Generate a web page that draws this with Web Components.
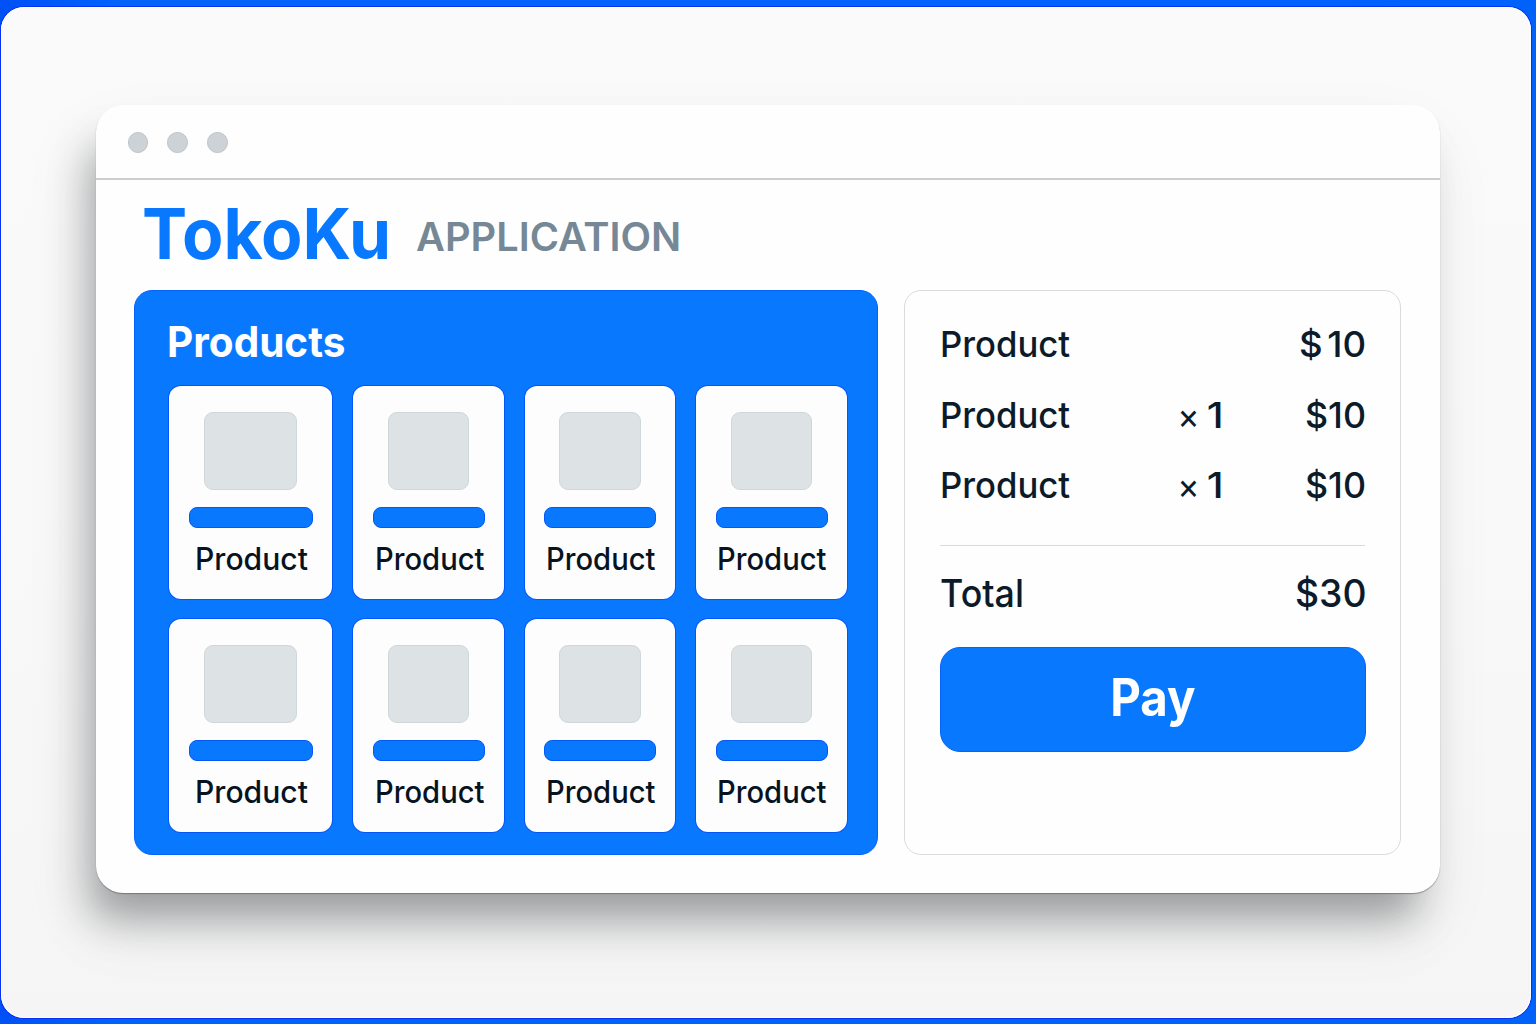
<!DOCTYPE html>
<html lang="en">
<head>
<meta charset="utf-8">
<title>TokoKu Application</title>
<style>
html,body{margin:0;height:100%}
body{background:linear-gradient(90deg,#0050f5,#0064fb 8%,#0062fb);font-family:Inter,"Liberation Sans",sans-serif;color:#0c1b2a;overflow:hidden}
</style>
</head>
<body>
<toko-stage>
  <app-window>
    <brand-header></brand-header>
    <product-panel></product-panel>
    <cart-panel></cart-panel>
  </app-window>
</toko-stage>
<script>
const define = (name, html, after) => customElements.define(name, class extends HTMLElement {
  constructor(){ super(); this.attachShadow({mode:'open'}).innerHTML = html; }
  connectedCallback(){ if(after) after(this, this.shadowRoot); }
});

// Text whose ink spans exactly `w` pixels and whose capitals are `cap` pixels tall.
class FitText extends HTMLElement {
  constructor(){
    super();
    this.attachShadow({mode:'open'}).innerHTML = `<style>
      :host{display:block;flex:none}
      span{display:inline-block;white-space:pre;transform-origin:0 50%;vertical-align:top}
    </style><span></span>`;
  }
  connectedCallback(){
    const w=+this.getAttribute('w'), cap=+this.getAttribute('cap'), weight=this.getAttribute('weight')||500;
    const text=this.getAttribute('text'), size=cap/.7273;
    const c=document.createElement('canvas').getContext('2d');
    c.font=`${weight} ${size}px Inter`;
    c.wordSpacing='-5px';
    const m=c.measureText(text), left=m.actualBoundingBoxLeft, ink=m.actualBoundingBoxRight+left;
    const s=this.shadowRoot.querySelector('span'), k=w/ink;
    s.textContent=text;
    this.style.cssText+=`;width:${w}px;height:${cap}px`;
    s.style.cssText=`font:${weight} ${size}px/${cap}px Inter,"Liberation Sans",sans-serif;word-spacing:-5px;transform:translateX(${left*k}px) scaleX(${k})`;
  }
}
customElements.define('fit-text', FitText);

define('toko-stage', `<style>
  :host{display:block;box-sizing:border-box;height:100vh;padding:7px 5px 6px 1px}
  div{box-sizing:border-box;height:1011px;padding:98px 91px 0 95px;border-radius:23px;background:linear-gradient(#fafafa,#f9f9f9 50%,#f5f5f5);box-shadow:0 0 0 1px #0a30f0,inset 0 0 0 1px #fff;overflow:hidden}
</style><div><slot></slot></div>`);

define('app-window', `<style>
  :host{display:grid;box-sizing:border-box;width:1344px;height:788px;border-radius:27px;background:#fefefe;
    grid-template:75px 110px 565px / 744px 497px;column-gap:26px;padding:0 39px 38px 38px;
    box-shadow:0 1px 1px rgba(70,74,78,.5),-14px 34px 40px -9px rgba(32,36,40,.38),-10px 34px 70px rgba(0,0,0,.075)}
  header{grid-column:1/-1;margin:0 -39px 0 -38px;box-sizing:border-box;border-bottom:2px solid #cbcdce;display:flex;gap:19.2px;padding:27px 0 0 31.8px}
  i{width:20.5px;height:20.5px;box-sizing:border-box;border-radius:50%;background:#cdd2d6;border:1px solid #bdc5ca}
</style><header><i></i><i></i><i></i></header><slot></slot>`);

define('brand-header', `<style>
  :host{display:flex;grid-column:1/-1;padding:28px 0 0 10px;gap:28.5px;align-items:flex-start}
  .a{color:#0879ff}.b{color:#768896;margin-top:14.5px}
</style><fit-text class="a" text="TokoKu" w="243.5" cap="51" weight="700"></fit-text><fit-text class="b" text="APPLICATION" w="262.5" cap="28.5" weight="600"></fit-text>`);

define('product-card', `<style>
  :host{display:flex;flex-direction:column;align-items:center;box-sizing:border-box;border-radius:12px;background:#fdfdfe;box-shadow:0 0 0 1px #0456fb;color:#07131f}
  .p{box-sizing:border-box;height:78px;width:var(--pic);margin-top:26px;border-radius:9px;background:#dde2e5;border:1px solid #d0d7da}
  .b{box-sizing:border-box;height:21px;width:var(--bar);margin-top:17px;border-radius:8px;background:#0879ff;border:1px solid #0458f8}
  fit-text{margin:19.5px 0 0 var(--shift)}
</style><div class="p"></div><div class="b"></div><fit-text></fit-text>`, (el, root) => {
  const wide = el.hasAttribute('wide'), t = document.createElement('fit-text');
  el.style.setProperty('--pic', el.getAttribute('pic')+'px');
  el.style.setProperty('--bar', wide ? '124px' : '112px');
  el.style.setProperty('--shift', el.getAttribute('shift')+'px');
  t.setAttribute('text','Product'); t.setAttribute('w', wide ? 110.5 : 107);
  t.setAttribute('cap', 22.3); t.setAttribute('weight', wide ? 500 : 450);
  root.querySelector('fit-text').replaceWith(t);
});

const row = ['wide pic="93" shift="3"','pic="81" shift="4"','pic="82" shift="2"','pic="81" shift="2"'];
define('product-panel', `<style>
  :host{display:block;box-sizing:border-box;border-radius:18px;background:#0879ff;border:1px solid #0562fb;padding:35px 0 0 34px}
  .t{color:#fff;margin:0 0 29px -.5px}
  .g{display:grid;grid-template:213px 213px / 163px 151px 150px 151px;gap:20px 21px}
</style><fit-text class="t" text="Products" w="175.5" cap="31" weight="700"></fit-text>
<div class="g">${[...row,...row].map(a=>`<product-card ${a}></product-card>`).join('')}</div>`);

define('cart-row', `<style>
  :host{display:grid;grid-template-columns:238px 60px 1fr;align-items:start;height:var(--h,70.5px)}
  .q{display:flex;gap:11.5px;align-items:flex-start}.x{margin-top:1px}.m{justify-self:end}
</style><div class="n"></div><div class="q"></div><div class="m"></div>`, (el, root) => {
  const f=(t,w,cap,wt,c='')=>`<fit-text class="${c}" text="${t}" w="${w}" cap="${cap}" weight="${wt}"></fit-text>`;
  const a=n=>el.getAttribute(n), cap=a('cap')||26;
  root.querySelector('.n').innerHTML=f(a('name'),a('nw'),cap,500);
  if(a('qty')) root.querySelector('.q').innerHTML=f('×',17,26,400,'x')+f(a('qty'),12.5,26,500);
  root.querySelector('.m').innerHTML=f(a('price'),a('pw'),cap,500);
});

define('cart-panel', `<style>
  :host{display:block;box-sizing:border-box;border:1px solid #d9dbdc;border-radius:17px;padding:40px 35px 0}
  hr{border:0;height:1.5px;background:#d8dadb;margin:2px 0 34px}
  cart-row{padding-left:1.5px}
  button{all:unset;box-sizing:border-box;display:flex;justify-content:center;width:426px;height:105px;padding:31px 0 0 2px;border:1px solid #0562fb;border-radius:20px;background:#0879ff;color:#fff}
</style>
<cart-row name="Product" nw="128" price="$ 10" pw="65"></cart-row>
<cart-row name="Product" nw="128" qty="1" price="$10" pw="59"></cart-row>
<cart-row name="Product" nw="128" qty="1" price="$10" pw="59"></cart-row>
<hr>
<cart-row style="--h:67px;padding-left:.5px" name="Total" nw="80.5" price="$30" pw="69" cap="27.7"></cart-row>
<button><fit-text text="Pay" w="82.5" cap="37.5" weight="700"></fit-text></button>`);
</script>
</body>
</html>
